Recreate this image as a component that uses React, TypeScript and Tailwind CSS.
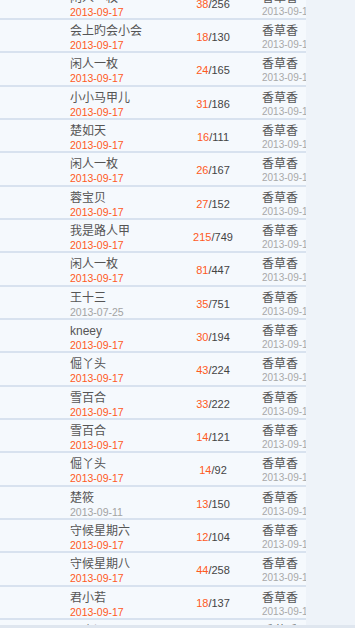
type Row = { name: string; date: string; hot: number; total: number; old?: boolean };

const rows: Row[] = [
  { name: "闲人一枚", date: "2013-09-17", hot: 38, total: 256 },
  { name: "会上旳会小会", date: "2013-09-17", hot: 18, total: 130 },
  { name: "闲人一枚", date: "2013-09-17", hot: 24, total: 165 },
  { name: "小小马甲儿", date: "2013-09-17", hot: 31, total: 186 },
  { name: "楚如天", date: "2013-09-17", hot: 16, total: 111 },
  { name: "闲人一枚", date: "2013-09-17", hot: 26, total: 167 },
  { name: "蓉宝贝", date: "2013-09-17", hot: 27, total: 152 },
  { name: "我是路人甲", date: "2013-09-17", hot: 215, total: 749 },
  { name: "闲人一枚", date: "2013-09-17", hot: 81, total: 447 },
  { name: "王十三", date: "2013-07-25", hot: 35, total: 751, old: true },
  { name: "kneey", date: "2013-09-17", hot: 30, total: 194 },
  { name: "倔丫头", date: "2013-09-17", hot: 43, total: 224 },
  { name: "雪百合", date: "2013-09-17", hot: 33, total: 222 },
  { name: "雪百合", date: "2013-09-17", hot: 14, total: 121 },
  { name: "倔丫头", date: "2013-09-17", hot: 14, total: 92 },
  { name: "楚筱", date: "2013-09-11", hot: 13, total: 150, old: true },
  { name: "守候星期六", date: "2013-09-17", hot: 12, total: 104 },
  { name: "守候星期八", date: "2013-09-17", hot: 44, total: 258 },
  { name: "君小若", date: "2013-09-17", hot: 18, total: 137 },
  { name: "吴小酒", date: "2013-09-17", hot: 20, total: 118 },
];

function TopicRow({ row, first }: { row: Row; first?: boolean }) {
  return (
    <div
      className={`flex h-[33.333px] shrink-0 overflow-hidden border-b-2 border-[#d8e2ef] pl-[70px] ${
        first ? "mt-[-13.333px]" : ""
      }`}
    >
      <div className="w-[100px] shrink-0 pt-[3px]">
        <div className="text-[12px] leading-[16px] text-[#555] whitespace-nowrap">{row.name}</div>
        <div
          className={`text-[10.5px] leading-[12px] ${row.old ? "text-[#a3a3a3]" : "text-[#ff5a1e]"}`}
        >
          {row.date}
        </div>
      </div>
      <div className="flex w-[86px] shrink-0 items-center justify-center pt-[3px] text-[11px] text-[#444]">
        <span className="text-[#ff5a1e]">{row.hot}</span>/{row.total}
      </div>
      <div className="shrink-0 pl-[6px] pt-[3px] whitespace-nowrap">
        <div className="text-[12px] leading-[16px] text-[#555]">香草香</div>
        <div className="text-[10px] leading-[12px] text-[#a8a8a8]">2013-09-17</div>
      </div>
    </div>
  );
}

export default function App() {
  return (
    <main
      className="flex h-[628px] w-[355px] flex-col overflow-hidden bg-[#eef3f9]"
      style={{ fontFamily: '"Liberation Sans", "Noto Sans CJK SC", sans-serif' }}
    >
      <div className="flex w-[306px] flex-1 flex-col overflow-hidden bg-[#f5f9fd]">
        {rows.map((r, i) => (
          <TopicRow key={i} row={r} first={i === 0} />
        ))}
      </div>
      <div className="h-[3px] shrink-0 bg-[#dfe6ef]" />
    </main>
  );
}
